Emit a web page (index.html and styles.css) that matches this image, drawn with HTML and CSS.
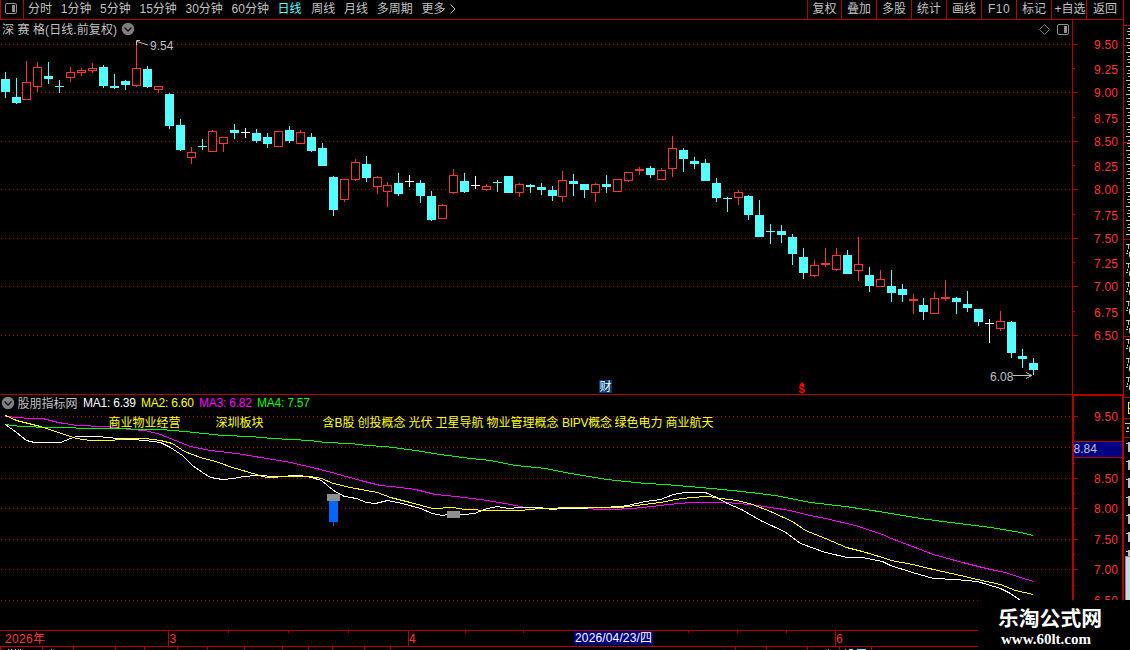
FILE: index.html
```html
<!DOCTYPE html>
<html lang="zh-CN">
<head>
    <meta charset="UTF-8">
    <title>深赛格 日线</title>
    <link rel="stylesheet" href="styles.css">
</head>
<body>
    <div class="terminal">
        <div class="main">
            <!-- 顶部工具栏 -->
            <div class="toolbar">
                <div class="panel-btn">
                    <svg width="14" height="14" viewBox="0 0 14 14">
                        <rect x="1.5" y="1.5" width="11" height="10" rx="1.5" fill="none" stroke="#909090"/>
                        <rect x="8" y="3" width="3" height="7" fill="#909090"/>
                    </svg>
                </div>
                <div class="periods">
                    <span>分时</span>
                    <span>1分钟</span>
                    <span>5分钟</span>
                    <span>15分钟</span>
                    <span>30分钟</span>
                    <span>60分钟</span>
                    <span class="active">日线</span>
                    <span>周线</span>
                    <span>月线</span>
                    <span>多周期</span>
                    <span>更多</span>
                    <svg class="more" width="6" height="10" viewBox="0 0 6 10"><path d="M0.5 0.5L5 5L0.5 9.5" fill="none" stroke="#c0c0c0"/></svg>
                </div>
                <div class="tools">
                    <span>复权</span>
                    <span>叠加</span>
                    <span>多股</span>
                    <span>统计</span>
                    <span>画线</span>
                    <span class="f10">F10</span>
                    <span>标记</span>
                    <span class="fav">+自选</span>
                    <span>返回</span>
                </div>
            </div>

            <!-- K线图 -->
            <svg class="chart" width="1124" height="374" viewBox="0 20 1124 374">
                <g id="price-grid"></g>
                <g id="candles"></g>
                <rect class="line" x="1072" y="20" width="1" height="374"/>
                <rect class="line" x="1123" y="20" width="1" height="374"/>
                <g id="price-axis"></g>

                <text class="gray" x="2" y="34" textLength="115">深 赛 格(日线.前复权)</text>
                <circle cx="128" cy="29" r="6.2" fill="#808080"/>
                <path d="M124.5 27.5L128 31L131.5 27.5" fill="none" stroke="#101010" stroke-width="1.3"/>
                <path d="M1044.5 24.5L1049.5 29.5L1044.5 34.5L1039.5 29.5Z" fill="none" stroke="#808080"/>
                <rect x="1057.500" y="24.500" width="11" height="10" rx="1.5" fill="none" stroke="#909090"/>
                <rect x="1064" y="26" width="3" height="7" fill="#909090"/>

                <!-- 最高价、最低价 -->
                <path class="arrow" d="M137 41.500L148 45M136.500 45V40.500H140"/>
                <text class="gray" x="150" y="50">9.54</text>
                <path class="arrow" d="M1013 375.500H1031M1026 372.500L1032 375.500L1026 378.500"/>
                <text class="gray" x="990" y="381">6.08</text>

                <rect x="599" y="380" width="13" height="13" fill="#003c78"/>
                <text class="white" x="599.500" y="391">财</text>
                <path d="M799.500 385L802 382L804.500 385Z" fill="#ff0000"/>
                <text class="dollar" x="798.500" y="393">$</text>
            </svg>

            <!-- 均线指标 -->
            <svg class="chart" width="1124" height="236" viewBox="0 394 1124 236">
                <g id="ma-grid"></g>
                <rect class="line" x="0" y="394" width="1124" height="1"/>
                <rect class="line" x="1072" y="394" width="52" height="2"/>
                <rect class="line" x="1072" y="394" width="2" height="206"/>
                <rect class="line" x="1122" y="394" width="2" height="206"/>
                <g id="ma-axis"></g>
                <rect class="line" x="1074" y="441" width="48" height="17"/>
                <rect x="1074" y="442" width="48" height="15" fill="#000084"/>
                <text class="gray" x="1073.500" y="453">8.84</text>

                <circle cx="8" cy="403" r="6.2" fill="#808080"/>
                <path d="M4.5 401.500L8 405L11.5 401.500" fill="none" stroke="#101010" stroke-width="1.3"/>
                <text class="gray" x="17.500" y="408">股朋指标网</text>
                <text class="white" x="83" y="407" textLength="53">MA1: 6.39</text>
                <text class="yellow" x="141" y="407" textLength="53">MA2: 6.60</text>
                <text class="magenta" x="199" y="407" textLength="53">MA3: 6.82</text>
                <text class="green" x="257" y="407" textLength="53">MA4: 7.57</text>

                <g id="ma-lines"></g>

                <rect x="329" y="501" width="9" height="21" fill="#0066ff"/>
                <rect x="333" y="522" width="1" height="4" fill="#0066ff"/>
                <rect x="327" y="494" width="13" height="7" fill="#909090"/>
                <rect x="447" y="511" width="13" height="7" fill="#909090"/>

                <!-- 所属板块 -->
                <text class="yellow" x="108.500" y="427">商业物业经营</text>
                <text class="yellow" x="215.500" y="427">深圳板块</text>
                <text class="yellow" x="322.500" y="427" textLength="32">含B股</text>
                <text class="yellow" x="357.500" y="427">创投概念</text>
                <text class="yellow" x="408.500" y="427">光伏</text>
                <text class="yellow" x="435.500" y="427">卫星导航</text>
                <text class="yellow" x="486.500" y="427">物业管理概念</text>
                <text class="yellow" x="562" y="427" textLength="50">BIPV概念</text>
                <text class="yellow" x="614.500" y="427">绿色电力</text>
                <text class="yellow" x="665.500" y="427">商业航天</text>
            </svg>

            <!-- 日期轴 -->
            <svg class="chart" width="1124" height="20" viewBox="0 630 1124 20">
                <rect class="line" x="0" y="630" width="978" height="1"/>
                <rect class="line" x="0" y="646" width="978" height="1"/>
                <g id="date-axis"></g>
                <text class="red" x="5" y="643" textLength="40">2026年</text>
                <text class="red" x="169.500" y="643">3</text>
                <text class="red" x="409" y="643">4</text>
                <text class="red" x="836" y="643">6</text>
                <rect x="574" y="631" width="79" height="14" fill="#000084"/>
                <text class="white" x="575" y="642" textLength="77">2026/04/23/四</text>
                <rect x="849" y="649" width="4" height="1" fill="#54ffff"/>
                <rect x="857" y="649" width="9" height="1" fill="#54ffff"/>
            </svg>
        </div>

        <!-- 右侧报价栏边缘 -->
        <svg class="side" width="6" height="650" viewBox="1124 0 6 650">
            <g id="side-marks"></g>
            <rect x="1125" y="556" width="5" height="44" fill="#808890"/>
            <rect x="1126" y="557" width="4" height="43" fill="#c8d8e0"/>
        </svg>

        <div class="watermark">
            <div class="site-name">乐淘公式网</div>
            <div class="site-url">www.60lt.com</div>
        </div>
    </div>
    <script src="chart.js"></script>
</body>
</html>
```

FILE: styles.css
```css
body {
    margin: 0;
    background-color: #000;
    font-family: "Liberation Sans", "Noto Sans CJK SC", sans-serif;
    font-size: 12px;
    color: #c0c0c0;
}
.terminal {
    position: relative;
    display: flex;
    width: 1130px;
    height: 650px;
    overflow: hidden;
}
.main {
    display: flex;
    flex-direction: column;
    width: 1124px;
}
.toolbar {
    display: flex;
    box-sizing: border-box;
    height: 20px;
    border-bottom: 1px solid #b40000;
    line-height: 19px;
    white-space: nowrap;
}
.panel-btn {
    box-sizing: border-box;
    width: 24px;
    padding: 2px 0 0 3px;
    border-left: 1px solid #b40000;
    border-right: 1px solid #b40000;
}
.panel-btn svg {
    display: block;
}
.periods {
    display: flex;
    gap: 8.7px;
    padding-left: 4px;
}
.periods .active {
    margin-right: 1px;
    color: #54ffff;
}
.more {
    margin: 4px 0 0 -4px;
}
.tools {
    display: grid;
    grid-template-columns: 34px repeat(7, 35px) 38px;
    margin-left: auto;
}
.tools span {
    box-sizing: border-box;
    border-left: 1px solid #b40000;
    text-align: center;
}
.tools span:last-child {
    border-right: 1px solid #b40000;
}
.tools .f10 {
    letter-spacing: 0.5px;
}
.tools .fav {
    padding-left: 2px;
}
.chart,
.side {
    display: block;
    flex: none;
}
svg text {
    font-size: 12px;
    white-space: pre;
}
.line {
    fill: #b40000;
}
.dots {
    stroke: #a80000;
    stroke-dasharray: 1 3;
}
.up {
    fill: #ff3232;
}
.down {
    fill: #54ffff;
}
.flat {
    fill: #fff;
}
.hole {
    fill: #000;
}
.ma {
    fill: none;
    stroke-width: 1;
    shape-rendering: crispEdges;
}
.arrow {
    fill: none;
    stroke: #c0c0c0;
}
.gray {
    fill: #c0c0c0;
}
.white {
    fill: #fff;
}
.yellow {
    fill: #ffff00;
}
.magenta {
    fill: #ff00ff;
}
.green {
    fill: #00ff00;
}
.red {
    fill: #ff3232;
}
.dollar {
    fill: #ff0000;
    font-weight: bold;
    font-size: 11px;
}
.watermark {
    position: absolute;
    left: 978px;
    top: 600px;
    box-sizing: border-box;
    width: 152px;
    height: 50px;
    padding: 7px 0 0 20px;
    background-color: #000;
    color: #fff;
    font-weight: bold;
    white-space: nowrap;
}
.site-name {
    font-size: 20.8px;
    line-height: 24px;
}
.site-url {
    margin-left: 3px;
    font-family: "Liberation Serif", serif;
    font-size: 15px;
    line-height: 16px;
}
```

FILE: chart.js
```js
// x, 最高, 实体上沿, 实体下沿, 最低, 类型
const candles = [
    [5, 72, 79, 92, 98, 'd'], [16, 78, 97, 103, 104, 'd'], [26, 61, 82, 100, 100, 'u'], [37, 62, 67, 87, 92, 'u'],
    [48, 62, 76, 79, 84, 'd'], [59, 80, 86, 87, 93, 'd'], [70, 67, 72, 78, 82, 'u'], [81, 68, 70, 73, 76, 'u'],
    [92, 63, 68, 71, 73, 'u'], [103, 65, 67, 86, 88, 'd'], [114, 74, 86, 88, 89, 'd'], [125, 80, 81, 85, 90, 'd'],
    [136, 42, 68, 86, 87, 'u'], [147, 66, 69, 87, 88, 'd'], [158, 86, 86, 90, 93, 'u'], [169, 93, 94, 126, 129, 'd'],
    [180, 119, 125, 150, 151, 'd'], [191, 147, 152, 158, 164, 'u'], [202, 139, 146, 147, 150, 'd'], [212, 130, 131, 152, 152, 'u'],
    [223, 137, 137, 144, 152, 'u'], [234, 124, 130, 133, 139, 'd'], [245, 128, 132, 133, 138, 'w'], [256, 129, 133, 141, 143, 'd'],
    [267, 133, 137, 144, 148, 'd'], [278, 131, 131, 147, 147, 'u'], [289, 126, 130, 141, 143, 'd'], [300, 130, 132, 144, 144, 'u'],
    [311, 133, 137, 151, 152, 'd'], [322, 143, 148, 166, 166, 'd'], [333, 176, 177, 210, 216, 'd'], [344, 179, 179, 200, 202, 'u'],
    [355, 159, 162, 180, 181, 'u'], [366, 156, 164, 178, 182, 'd'], [377, 176, 177, 187, 194, 'u'], [387, 182, 185, 192, 207, 'u'],
    [398, 173, 183, 194, 196, 'd'], [409, 175, 181, 182, 187, 'w'], [420, 180, 183, 196, 203, 'd'], [431, 191, 196, 220, 221, 'd'],
    [442, 204, 205, 219, 219, 'u'], [453, 169, 175, 193, 194, 'u'], [464, 173, 181, 192, 193, 'd'], [475, 176, 185, 186, 189, 'w'],
    [486, 184, 186, 190, 191, 'u'], [497, 180, 182, 183, 192, 'd'], [508, 176, 176, 193, 193, 'd'], [519, 183, 184, 193, 197, 'u'],
    [530, 184, 185, 187, 193, 'd'], [541, 183, 187, 190, 195, 'd'], [552, 186, 190, 196, 201, 'd'], [562, 171, 180, 197, 202, 'u'],
    [573, 174, 181, 184, 196, 'd'], [584, 184, 184, 190, 198, 'd'], [595, 183, 184, 193, 202, 'u'], [606, 175, 184, 187, 193, 'd'],
    [617, 179, 179, 192, 192, 'u'], [628, 172, 172, 181, 182, 'u'], [639, 167, 169, 171, 175, 'u'], [650, 166, 168, 175, 178, 'd'],
    [661, 168, 170, 180, 180, 'u'], [672, 136, 148, 169, 177, 'u'], [683, 148, 150, 159, 172, 'd'], [694, 157, 161, 164, 169, 'd'],
    [705, 159, 163, 181, 181, 'd'], [716, 178, 183, 198, 202, 'd'], [727, 197, 198, 199, 212, 'd'], [738, 190, 192, 198, 205, 'u'],
    [748, 195, 196, 215, 220, 'd'], [759, 200, 215, 237, 237, 'd'], [770, 224, 231, 232, 244, 'd'], [781, 225, 231, 235, 243, 'd'],
    [792, 234, 237, 254, 265, 'd'], [803, 248, 257, 273, 279, 'd'], [814, 260, 265, 276, 277, 'u'], [825, 248, 263, 265, 267, 'u'],
    [836, 248, 255, 270, 271, 'u'], [847, 250, 255, 274, 274, 'd'], [858, 237, 264, 271, 281, 'u'], [869, 267, 275, 286, 292, 'd'],
    [880, 270, 279, 287, 287, 'u'], [891, 270, 286, 293, 302, 'd'], [902, 284, 289, 295, 302, 'd'], [913, 294, 299, 301, 314, 'u'],
    [923, 298, 305, 312, 320, 'd'], [934, 292, 298, 314, 314, 'u'], [945, 280, 297, 299, 301, 'u'], [956, 297, 298, 302, 314, 'd'],
    [967, 291, 304, 308, 312, 'd'], [978, 309, 309, 322, 326, 'd'], [989, 319, 323, 324, 343, 'w'], [1000, 311, 321, 329, 331, 'u'],
    [1011, 321, 322, 353, 358, 'd'], [1022, 349, 356, 359, 368, 'd'], [1033, 358, 363, 370, 375, 'd']
];

// 均线
const maLines = [
    { color: '#ff00ff', points: '5,416 30,418 42,418 58,422 76,425 105,426 130,429 145,430 160,434 175,440 190,446 210,450 236,453 260,457 290,462 316,468 335,473 360,480 380,485 400,487 415,489 435,494 455,496 480,499 505,503 525,507 560,508 585,508 600,509 612,509 632,508 652,506 668,504 690,502 725,502 750,504 770,507 790,510 805,514 825,518 855,525 882,534 891,538 912,546 933,554 962,562 990,569 1005,572 1020,577 1033,581' },
    { color: '#00ff00', points: '5,424 20,426 50,427 100,428 160,429 185,431 222,435 250,436 272,438 310,440 325,442 350,443 366,445 385,446 415,450 440,454 470,458 490,460 515,465 545,468 570,473 600,478 615,480 645,483 665,484 700,487 722,489 750,492 775,495 810,502 845,506 885,512 920,518 950,522 990,527 1020,532 1033,535' },
    { color: '#ffffff', points: '5,424 16,432 26,440 34,442 60,442 70,438 76,436 97,436 118,438 145,440 160,442 170,447 182,455 192,465 202,472 210,477 222,479 233,478 243,476 256,475 276,476 300,475 311,477 321,480 333,490 344,496 356,498 366,502 375,503 387,500 402,503 420,508 432,513 442,515 453,513 464,514 474,513 487,508 497,506 508,508 519,507 540,507 551,509 562,508 573,508 602,507 620,506 627,505 645,501 660,499 673,494 685,492 705,492 716,497 727,503 741,509 762,521 784,531 800,543 825,552 847,557 862,557 882,561 890,565 912,572 933,578 955,579 977,581 1000,588 1010,593 1020,600' },
    { color: '#ffff00', points: '5,415 16,420 40,426 55,431 76,438 90,440 110,440 130,438 145,438 160,440 172,443 184,451 200,457 215,461 232,467 256,474 266,477 290,476 310,476 321,478 333,483 350,487 366,490 377,492 390,497 410,502 432,508 453,507 464,509 490,510 520,510 540,508 575,507 620,507 636,505 660,502 675,499 690,497 708,496 720,498 737,500 752,504 770,511 792,521 805,530 825,538 846,547 862,551 882,557 891,560 912,564 933,569 960,575 977,579 1000,584 1015,590 1033,594' }
];

function rect(x, y, w, h, cls) {
    return `<rect x="${x}" y="${y}" width="${w}" height="${h}" class="${cls}"/>`;
}

function fill(id, html) {
    document.getElementById(id).innerHTML = html;
}

function gridLine(y, right) {
    return `<line class="dots" x1="1" x2="${right}" y1="${y + 0.5}" y2="${y + 0.5}"/>`;
}

// K线
let html = '';
for (const [x, high, top, bottom, low, type] of candles) {
    const cls = { u: 'up', d: 'down', w: 'flat' }[type];
    html += rect(x, high, 1, low - high, cls);
    html += rect(x - 4, top, 9, bottom - top, cls);
    if (type === 'u' && bottom - top > 2) {
        html += rect(x - 3, top + 1, 7, bottom - top - 2, 'hole');
    }
}
fill('candles', html);

// 网格和刻度
const priceMajor = [44, 92, 141, 189, 238, 286, 335];
const priceMinor = [68, 117, 165, 214, 262, 311];
const maMajor = [416, 447, 478, 508, 539, 569];
const maMinor = [432, 463, 493, 524, 554, 585];

fill('price-grid', priceMajor.map(y => gridLine(y, 1072)).join(''));
fill('ma-grid', maMajor.map(y => gridLine(y, 1072)).join('') + gridLine(600, 978));

function ticks(major, minor, x) {
    return major.map(y => rect(x, y, 5, 1, 'line')).join('') +
        minor.map(y => rect(x, y, 2, 1, 'line')).join('');
}

function labels(list) {
    return list.map(([value, y]) => `<text class="red" x="1094" y="${y}" textLength="24">${value}</text>`).join('');
}

fill('price-axis', ticks(priceMajor, priceMinor, 1073) + labels([
    ['9.50', 49], ['9.25', 74], ['9.00', 97], ['8.75', 123], ['8.50', 146], ['8.25', 171], ['8.00', 194],
    ['7.75', 220], ['7.50', 243], ['7.25', 268], ['7.00', 291], ['6.75', 317], ['6.50', 340]
]));
fill('ma-axis', ticks(maMajor, maMinor, 1073) + labels([
    ['9.50', 421], ['8.50', 483], ['8.00', 513], ['7.50', 544], ['7.00', 574], ['6.50', 605]
]));

fill('ma-lines', maLines.map(l =>
    `<polyline class="ma" transform="translate(0.5 0.5)" stroke="${l.color}" points="${l.points}"/>`).join(''));

// 日期轴刻度
fill('date-axis',
    [168, 408, 652, 835].map(x => rect(x, 631, 1, 15, 'line')).join('') +
    [228, 288, 348, 465, 523, 688, 737, 786].map(x => rect(x, 631, 1, 2, 'line')).join('') +
    [0, 42, 73, 115, 144, 177, 207, 244, 282, 308, 332, 364, 390, 735, 766, 807, 839, 871].map(x => rect(x, 647, 1, 3, 'line')).join('') +
    [8, 11, 15, 18, 20, 51, 828, 845].map(x => rect(x, 649, 1, 1, 'gray')).join(''));

// 报价栏
html = [25, 45, 142, 239, 336, 397, 418, 437].map(y => rect(1124, y, 6, 1, 'line')).join('');
for (let y = 28; y < 232; y += 14) {
    html += rect(1128, y, 2, 1, 'gray') + rect(1127, y + 3, 3, 1, 'gray') +
        rect(1128, y + 6, 2, 1, 'gray') + rect(1126, y + 10, 4, 1, 'gray');
}
for (let y = 244; y < 385; y += 19) {
    html += rect(1126, y, 4, 1, 'gray') + rect(1128, y, 1, 5, 'gray') +
        rect(1127, y + 6, 1, 2, 'gray') + rect(1126, y + 9, 2, 1, 'gray') + rect(1129, y + 8, 1, 5, 'gray');
}
html += rect(1128, 402, 2, 1, 'yellow') + rect(1128, 402, 1, 12, 'yellow') + rect(1128, 408, 2, 1, 'yellow') + rect(1128, 413, 2, 1, 'yellow');
html += rect(1125, 423, 5, 1, 'gray') + rect(1127, 427, 2, 2, 'gray') + rect(1126, 431, 3, 1, 'gray');
for (let y = 442; y < 542; y += 18) {
    html += rect(1126, y + 1, 4, 1, 'gray') + rect(1128, y, 2, 10, 'gray');
}
html += rect(1126, 551, 4, 1, 'gray') + rect(1128, 550, 2, 6, 'gray');
html += rect(1123, 0, 1, 20, 'line');
fill('side-marks', html);
```
